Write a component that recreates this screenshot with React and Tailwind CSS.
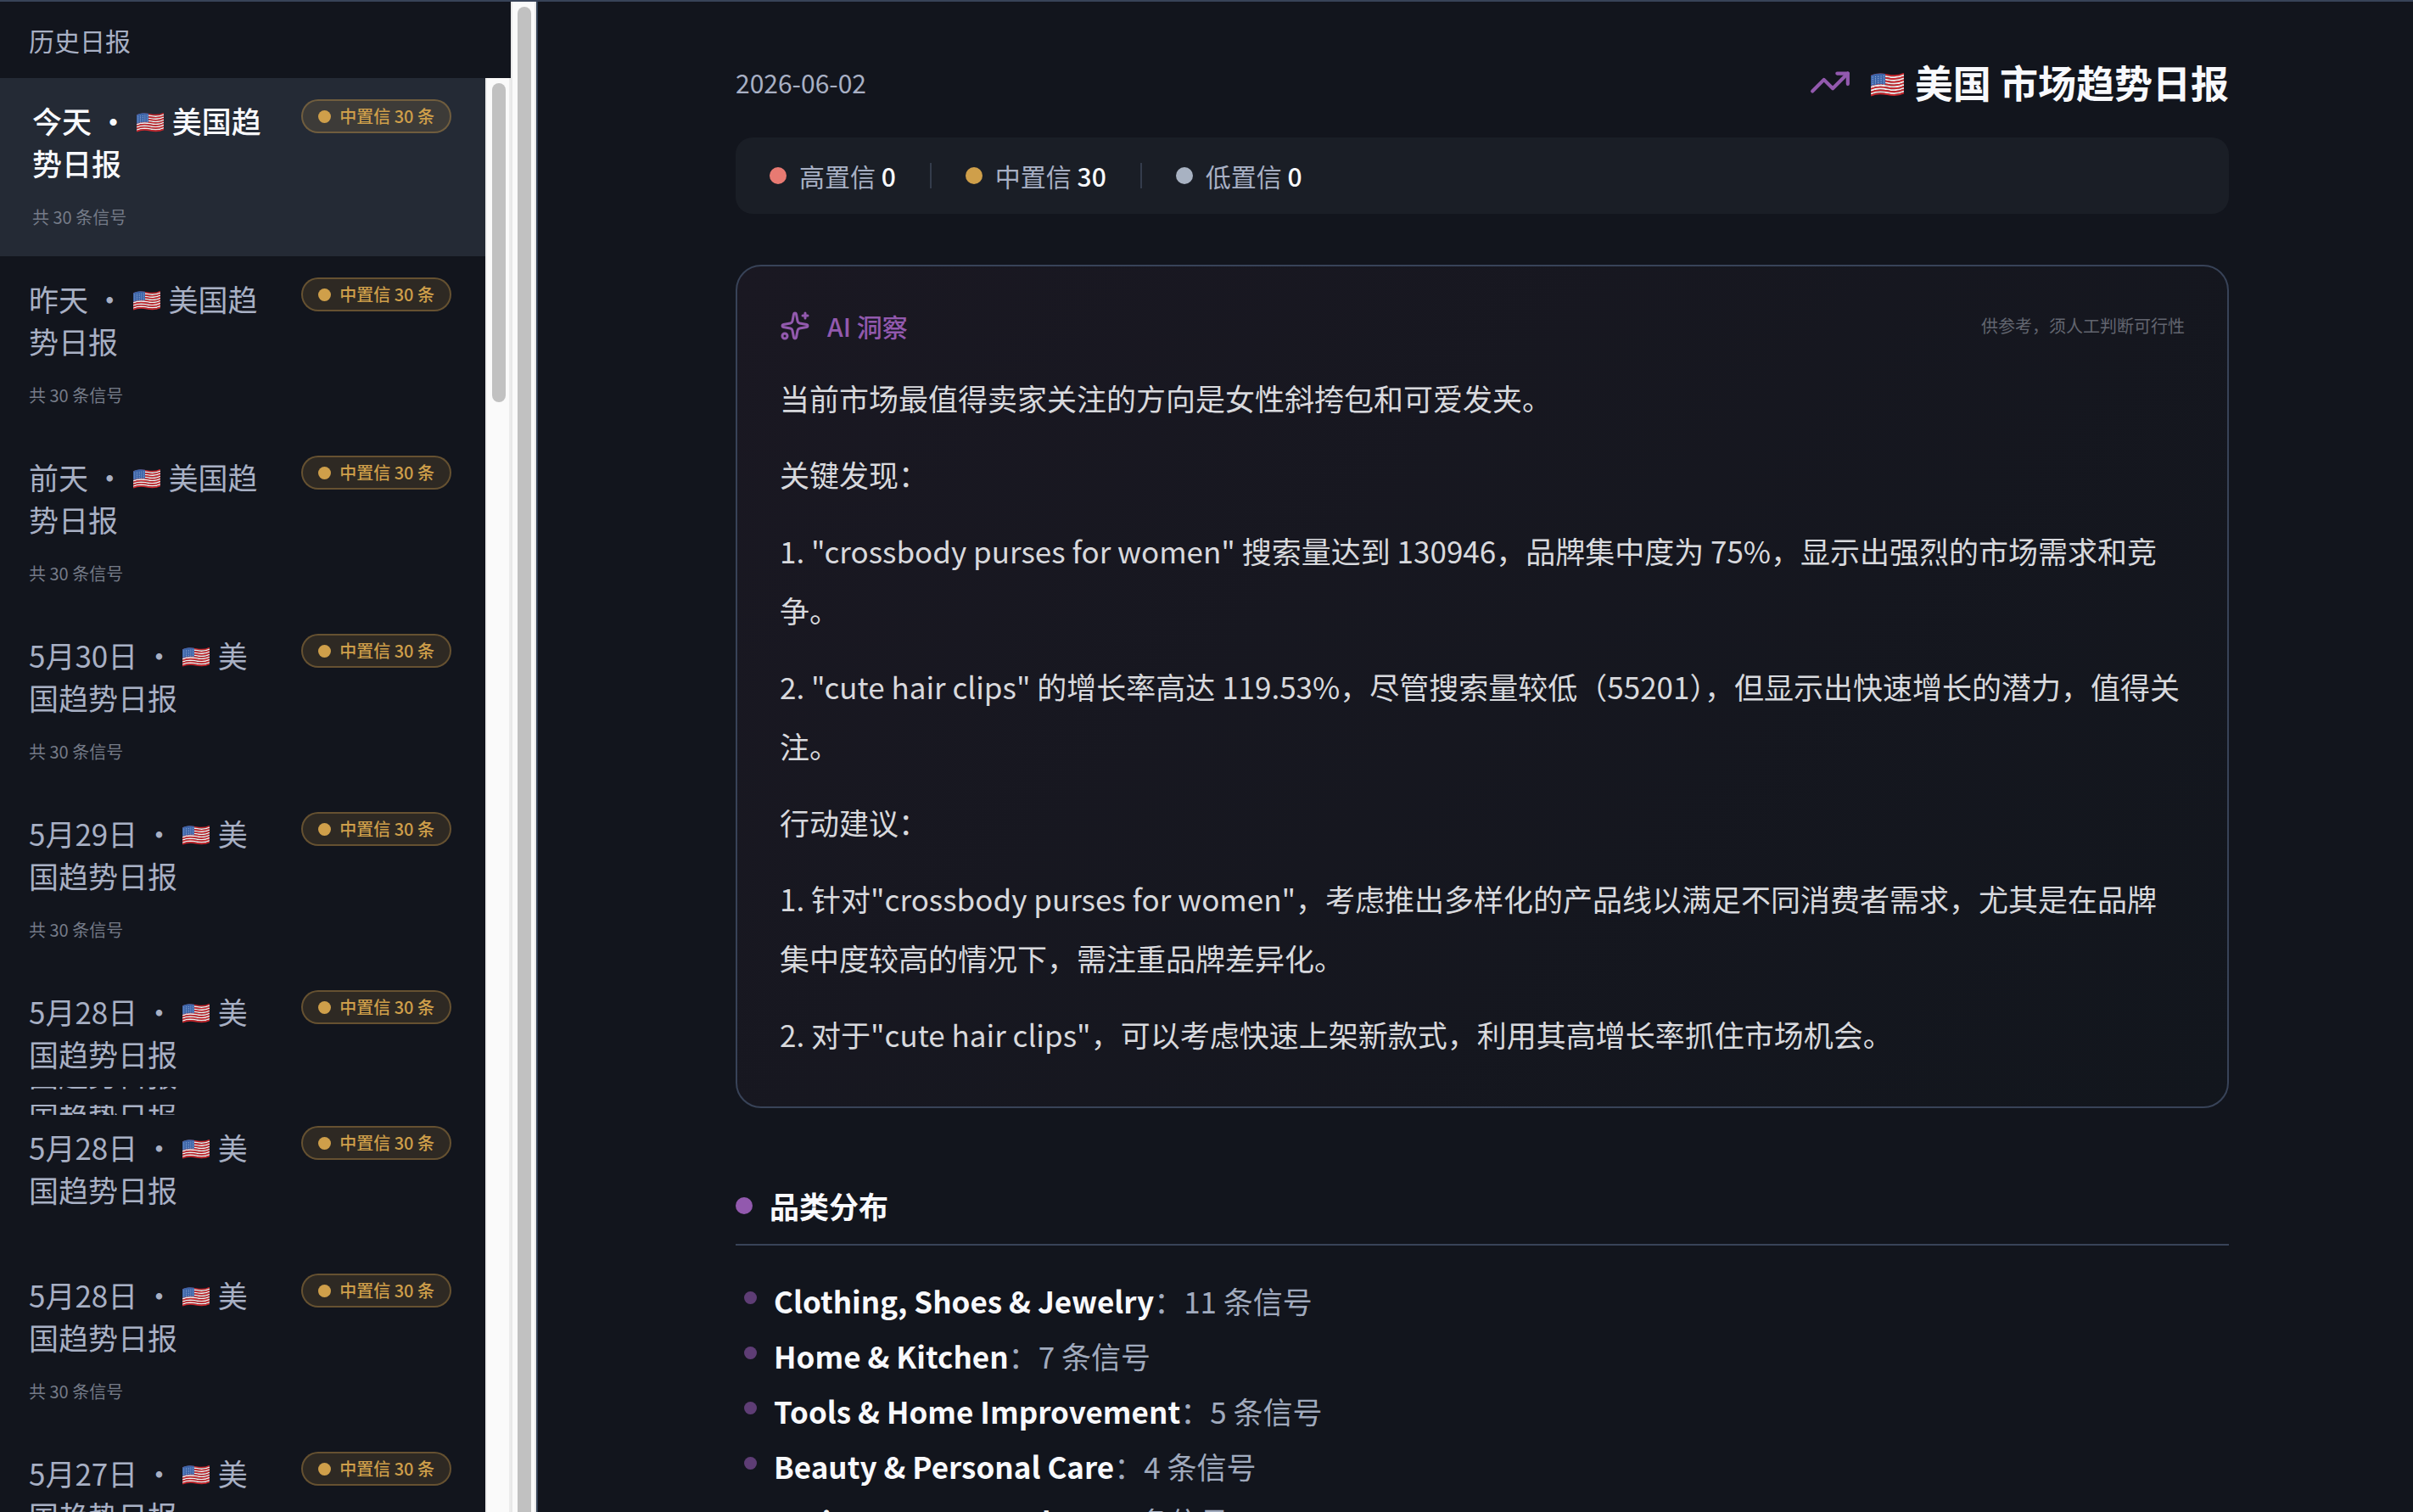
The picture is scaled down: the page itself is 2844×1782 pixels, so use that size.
import { Sparkles, TrendingUp } from "lucide-react";

const reports = [
  { day: "今天", active: true },
  { day: "昨天" },
  { day: "前天" },
  { day: "5月30日" },
  { day: "5月29日" },
  { day: "5月28日", variant: "cut" },
  { day: "5月28日", variant: "short" },
  { day: "5月28日" },
  { day: "5月27日" },
];

const levels = [
  { label: "高置信", count: 0, dot: "bg-[#e87a72]" },
  { label: "中置信", count: 30, dot: "bg-[#cf9f4a]" },
  { label: "低置信", count: 0, dot: "bg-[#a8b2c2]" },
];

const insights = [
  "当前市场最值得卖家关注的方向是女性斜挎包和可爱发夹。",
  "关键发现：",
  '1. "crossbody purses for women" 搜索量达到 130946，品牌集中度为 75%，显示出强烈的市场需求和竞争。',
  '2. "cute hair clips" 的增长率高达 119.53%，尽管搜索量较低（55201），但显示出快速增长的潜力，值得关注。',
  "行动建议：",
  '1. 针对"crossbody purses for women"，考虑推出多样化的产品线以满足不同消费者需求，尤其是在品牌集中度较高的情况下，需注重品牌差异化。',
  '2. 对于"cute hair clips"，可以考虑快速上架新款式，利用其高增长率抓住市场机会。',
];

const categories = [
  { name: "Clothing, Shoes & Jewelry", count: 11 },
  { name: "Home & Kitchen", count: 7 },
  { name: "Tools & Home Improvement", count: 5 },
  { name: "Beauty & Personal Care", count: 4 },
  { name: "Patio, Lawn & Garden", count: 3 },
];

const wave = (y) => `M0 ${y + 3}C5 ${y + 0.6} 10 ${y + 0.6} 16 ${y + 1.8}S27 ${y + 3} 32 ${y + 0.4}`;
const stripes = Array.from({ length: 13 }, (_, i) => i);
const stars = [0, 1, 2, 3, 4].flatMap((r) => [0, 1, 2, 3, 4].map((c) => [1.8 + c * 2.7, 4 + r * 2 - c * 0.3]));

function Flag({ className }) {
  return (
    <svg viewBox="0 0 32 23" role="img" aria-label="美国国旗" className={className}>
      {stripes.map((i) => (
        <path
          key={i}
          d={wave(0.2 + i * 1.55)}
          fill="none"
          stroke={i % 2 ? "#f0eeee" : "#c9272d"}
          strokeWidth={i % 2 ? "1.55" : "1.7"}
        />
      ))}
      <path d="M0 2.4C5 0 10 0 14 .8V11.2C9 10.2 5 10.8 0 12.8Z" fill="#3c64a8" />
      {stars.map(([x, y], i) => (
        <circle key={i} cx={x} cy={y} r=".5" fill="#a9bfe2" />
      ))}
    </svg>
  );
}

function Badge() {
  return (
    <span className="flex h-10 shrink-0 items-center gap-2.5 rounded-full border-2 border-[#cf9f4a]/35 bg-[#cf9f4a]/15 px-[18px] text-[20px] leading-none font-medium text-[#cf9f4a]">
      <span className="size-[15px] rounded-full bg-[#cf9f4a]" />
      中置信 30 条
    </span>
  );
}

function ReportItem({ day, active, variant }) {
  const spacing =
    variant === "cut" ? "pt-[25px]" : variant === "short" ? "pt-[13px] pb-[49px]" : "pt-[25px] pb-[31px]";
  return (
    <li>
      <button
        type="button"
        aria-current={active ? "true" : undefined}
        className={`block w-full pr-10 text-left ${spacing} ${active ? "bg-[#242a35] pl-[38px]" : "pl-[34px]"}`}
      >
        <span className="flex items-start justify-between gap-8">
          <span
            className={`min-w-0 flex-1 text-[35px] leading-[50px] break-all ${active ? "font-medium text-[#f8f9fc]" : "text-[#a8b0c4]"}`}
          >
            {day} • <Flag className="mx-0.5 inline-block w-8 align-[1px]" /> 美国趋势日报
          </span>
          <Badge />
        </span>
        {!variant && <span className="mt-6 block text-[20px] leading-[30px] text-[#757b88]">共 30 条信号</span>}
      </button>
      {variant === "cut" && (
        <div aria-hidden="true" className="pt-3.5 pl-[34px] text-[35px] leading-[50px] text-[#a8b0c4]">
          <div className="h-[3px] overflow-hidden">
            <div className="-mt-10">国趋势日报</div>
          </div>
          <div className="mt-[18px] h-3 overflow-hidden">
            <div className="-mt-3">国趋势日报</div>
          </div>
        </div>
      )}
    </li>
  );
}

function Sidebar() {
  return (
    <aside className="flex w-[634px] shrink-0 border-r-2 border-[#334155]">
      <div className="flex min-w-0 flex-1 flex-col">
        <h2 className="h-[90px] shrink-0 pl-[34px] text-[30px] leading-[90px] text-[#a8b0c4]">历史日报</h2>
        <div className="flex min-h-0 flex-1">
          <ul className="min-w-0 flex-1 overflow-hidden">
            {reports.map((r, i) => (
              <ReportItem key={i} {...r} />
            ))}
          </ul>
          <div className="w-[30px] border-x-2 border-[#ececec] bg-[#fafafa] pt-1.5 pl-1.5">
            <div className="h-[376px] w-4 rounded-full bg-[#c1c1c1]" />
          </div>
        </div>
      </div>
      <div className="flex w-[30px] border-x-2 border-[#e8e8e8] bg-[#fafafa] pt-1.5 pl-1.5">
        <div className="w-4 rounded-t-full bg-[#c1c1c1]" />
      </div>
    </aside>
  );
}

export default function App() {
  return (
    <div className="flex h-screen overflow-hidden border-t-2 border-[#384358] bg-[#12151d] font-['Noto_Sans_CJK_SC',sans-serif]">
      <Sidebar />
      <main className="min-w-0 flex-1 overflow-hidden pt-[62px] pl-4">
        <div className="mx-auto max-w-[1760px]">
          <header className="mb-8 flex items-center justify-between">
            <time dateTime="2026-06-02" className="text-[30px] text-[#a8b0c4]">
              2026-06-02
            </time>
            <div className="flex items-center gap-5">
              <TrendingUp className="size-[50px] text-[#9259ae]" />
              <h1 className="text-[45px] leading-[66px] font-bold text-[#f8f9fc]">
                <Flag className="mx-[3px] inline-block w-[39px] align-[2px]" /> 美国 市场趋势日报
              </h1>
            </div>
          </header>

          <section className="flex h-[90px] items-center rounded-[20px] bg-[#1a1e26] px-10 text-[30px]">
            {levels.map((l, i) => (
              <div key={l.label} className="flex items-center">
                {i > 0 && <span className="mx-10 h-[30px] w-0.5 bg-[#343c4c]" />}
                <span className={`mr-[15px] size-5 rounded-full ${l.dot}`} />
                <span className="text-[#a8b0c4]">
                  {l.label} <strong className="font-medium text-[#f8f9fc]">{l.count}</strong>
                </span>
              </div>
            ))}
          </section>

          <section className="mt-[60px] rounded-[30px] border-2 border-[#384358] bg-linear-135 from-[#1a1822] to-[#12161d] px-[50px] pt-12 pb-[50px]">
            <div className="mb-7 flex h-11 items-center justify-between">
              <h2 className="flex items-center gap-5 text-[30px] font-medium text-[#9259ae]">
                <Sparkles className="size-9" />
                AI 洞察
              </h2>
              <span className="text-[20px] text-[#62656f]">供参考，须人工判断可行性</span>
            </div>
            <div className="flex flex-col gap-5 text-[35px] leading-[70px] text-[#d8d9dd]">
              {insights.map((t) => (
                <p key={t}>{t}</p>
              ))}
            </div>
          </section>

          <section className="mt-[89px]">
            <h2 className="flex items-center gap-5 border-b-2 border-[#384358] pb-[19px] text-[35px] leading-[52px] font-bold text-[#f8f9fc]">
              <span className="size-5 rounded-full bg-[#9259ae]" />
              品类分布
            </h2>
            <ul className="mt-8 pl-2.5 text-[35px] leading-[65px] text-[#a0aabd]">
              {categories.map((c) => (
                <li key={c.name} className="flex items-center gap-5">
                  <span className="mb-1.5 size-[15px] rounded-full bg-[#5e3d75]" />
                  <span>
                    <strong className="font-bold text-[#f8f9fc]">{c.name}</strong>：{c.count} 条信号
                  </span>
                </li>
              ))}
            </ul>
          </section>
        </div>
      </main>
    </div>
  );
}
